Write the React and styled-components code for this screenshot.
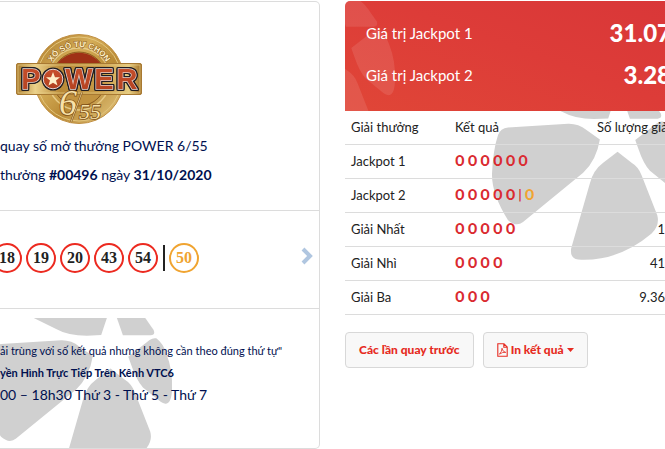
import React from "react";
import styled, { createGlobalStyle } from "styled-components";

const GlobalStyle = createGlobalStyle`
  *, *::before, *::after { box-sizing: border-box; }
  body {
    margin: 0;
    overflow-x: hidden;
    background: #fff;
    color: #222;
    font-family: Lato, "Open Sans", "Noto Sans", sans-serif;
    font-size: 13px;
    line-height: 20px;
  }
`;

const Page = styled.main`
  display: grid;
  grid-template-columns: minmax(0, 1fr) minmax(0, 1fr);
  gap: 25px;
  padding-top: 1px;
  align-items: start;
  overflow: hidden;
`;

const DrawCard = styled.article`
  border: 1px solid #dcdcdc;
  border-left: 0;
  border-radius: 0 5px 5px 0;
  color: #00104f;
  white-space: nowrap;
  overflow: hidden;
`;

const DrawHeader = styled.header`
  padding: 31px 0 21px;
  border-bottom: 1px solid #dcdcdc;
`;

const Logo = styled.svg`
  display: block;
  width: 128px;
  height: 92px;
  margin: 0 0 6px 15px;
`;

const LogoWord = styled.g`
  font: 700 29px "Liberation Sans", sans-serif;
  text-anchor: middle;
  fill: url(#copper);
  stroke: #ecd9d2;
  stroke-width: 1.4px;
  paint-order: stroke;
  filter: drop-shadow(1px 0 #201c22) drop-shadow(-1px 0 #201c22)
    drop-shadow(0 1px #201c22) drop-shadow(0 -1px #201c22);
`;

const DrawTitle = styled.h1`
  margin: 0;
  font-size: 14px;
  font-weight: 400;
  line-height: 29px;
`;

const DrawMeta = styled.p`
  margin: 0;
  font-size: 14px;
  line-height: 29px;
`;

const DrawNumbers = styled.section`
  display: flex;
  align-items: center;
  justify-content: space-between;
  height: 98px;
  padding: 0 6px 3px 0;
  border-bottom: 1px solid #dcdcdc;
`;

const BallList = styled.ul`
  display: flex;
  align-items: center;
  gap: 4px;
  margin: 0 0 0 -8px;
  padding: 0;
  list-style: none;
`;

const Ball = styled.li`
  display: grid;
  place-items: center;
  width: 30px;
  height: 30px;
  border: 2px solid ${(p) => (p.$bonus ? "#f0a431" : "#ec2a20")};
  border-radius: 50%;
  color: ${(p) => (p.$bonus ? "#f0a431" : "#222")};
  font: 700 16px/20px "Liberation Serif", serif;
`;

const BallDivider = styled.li`
  width: 2px;
  height: 26px;
  margin-left: 1px;
  background: #222;
`;

const NextButton = styled.button`
  display: flex;
  padding: 0 0 5px;
  border: 0;
  background: none;
  cursor: pointer;

  svg { width: 12px; height: 18px; }
`;

const DrawNotes = styled.section`
  position: relative;
  height: 139px;
  padding-top: 31px;
`;

const Note = styled.p`
  position: relative;
  margin: 0;
  font-size: ${(p) => (p.$large ? 14 : 11)}px;
  font-weight: ${(p) => (p.$strong ? 700 : 400)};
  line-height: 22px;
`;

const Watermark = styled.svg`
  position: absolute;
  left: ${(p) => p.$left}px;
  top: ${(p) => p.$top}px;
  width: 197px;
  fill: ${(p) => p.$fill || "#d0d0d0"};
  pointer-events: none;
`;

const Results = styled.section`
  min-width: 0;
  white-space: nowrap;
`;

const JackpotPanel = styled.dl`
  position: relative;
  margin: 0;
  padding: 11px 0 15px 21px;
  border-radius: 5px 0 0 0;
  overflow: hidden;
  background: linear-gradient(20deg, #e04637 0%, #dd3c38 55%, #d93738 100%);
  color: #fff;
`;

const JackpotRow = styled.div`
  position: relative;
  display: flex;
  align-items: center;
  justify-content: space-between;
  height: 42px;
`;

const JackpotName = styled.dt`
  font-size: 15px;
`;

const JackpotValue = styled.dd`
  margin: 0 -6px 0 0;
  font-size: 24px;
  font-weight: 900;
`;

const PrizeArea = styled.div`
  position: relative;
  overflow: hidden;
`;

const PrizeTable = styled.table`
  position: relative;
  width: 100%;
  table-layout: fixed;
  border-collapse: collapse;
`;

const PrizeRow = styled.tr`
  height: ${(p) => (p.$head ? 33 : 34)}px;
  border-bottom: 1px solid #dcdcdc;
`;

const HeadCell = styled.th`
  width: ${(p) => p.$width};
  padding: 0 0 0 ${(p) => (p.$inset ? 6 : 0)}px;
  font-weight: 400;
  text-align: left;
`;

const Cell = styled.td`
  padding: 0 0 0 ${(p) => (p.$inset ? 6 : 0)}px;
  text-align: ${(p) => (p.$end ? "right" : "left")};
`;

const Matches = styled.span`
  display: flex;
  align-items: center;
  gap: 3px;
  color: #da2a30;
  font-family: Roboto, sans-serif;
  font-size: 14px;
  font-weight: 700;
`;

const BonusMatch = styled.span`
  color: #f0a431;
`;

const Actions = styled.div`
  display: flex;
  gap: 9px;
  padding-top: 17px;
`;

const ActionButton = styled.button`
  display: inline-flex;
  align-items: center;
  gap: 3px;
  height: 36px;
  padding: 0 13px;
  border: 1px solid #d8d8d8;
  border-radius: 4px;
  background: #f8f8f8;
  color: #e62b22;
  font: inherit;
  font-size: 12px;
  font-weight: 900;
  cursor: pointer;
`;

const Petals = () => (
  <>
    <path d="M618-26H837L820 25L777 27Q720 27 685 7Z" />
    <path d="M880-60H915Q935-50 952-26L977 10Q983 25 968 26H885L867-26Z" />
    <path d="M520 52L700 41Q730 40 755 60L795 88Q785 150 745 188L565 335Q545 352 520 330Q470 250 472 190Q475 120 490 75Q497 54 520 52Z" />
    <path d="M985 35Q1005 50 1015 80Q1035 130 1032 190Q1030 232 1012 231Q1005 230 998 225L945 182Q925 160 910 115L901 90L965 40Q975 33 985 35Z" />
    <path d="M848 125L890 158Q910 170 920 195L967 315Q975 345 950 370Q850 455 730 448Q705 445 709 415L765 220Q775 180 805 158Z" />
  </>
);

const PowerLogo = () => (
  <Logo viewBox="0 0 128 92" role="img" aria-label="Power 6/55">
    <defs>
      <linearGradient id="gold" x1="0" y1="0" x2="1" y2="1">
        <stop offset="0" stopColor="#a87526" />
        <stop offset=".35" stopColor="#d5ad58" />
        <stop offset=".6" stopColor="#b98a35" />
        <stop offset="1" stopColor="#e9cf8b" />
      </linearGradient>
      <linearGradient id="band" x1="0" y1="0" x2="1" y2="0">
        <stop offset="0" stopColor="#a87a2c" />
        <stop offset=".15" stopColor="#ecd28b" />
        <stop offset=".35" stopColor="#b98a38" />
        <stop offset=".7" stopColor="#c99c48" />
        <stop offset=".9" stopColor="#e6cc80" />
        <stop offset="1" stopColor="#9d6b22" />
      </linearGradient>
      <linearGradient id="copper" x1="0" y1="0" x2="0" y2="1">
        <stop offset="0" stopColor="#c9502c" />
        <stop offset="1" stopColor="#b1401f" />
      </linearGradient>
      <path id="arc" d="M32 46A32 32 0 0 1 96 46" />
    </defs>
    <circle cx="64" cy="46" r="44.5" fill="url(#gold)" stroke="#c08f43" />
    <circle cx="64" cy="46" r="42" fill="none" stroke="#e3c57c" />
    <circle cx="64" cy="46" r="31" fill="none" stroke="#e6ca86" strokeWidth="1.5" />
    <circle cx="64" cy="46" r="27" fill="#c29340" stroke="#8d5c1f" />
    <path d="M42 31A27 27 0 0 1 86 31Z" fill="#9f3116" />
    <text fontFamily="Liberation Sans" fontWeight="700" fontSize="8" fill="#fff1c8" stroke="#8a5a1c" strokeWidth="1" paintOrder="stroke">
      <textPath href="#arc" startOffset="50%" textAnchor="middle">XỔ SỐ TỰ CHỌN</textPath>
    </text>
    <rect x="1.5" y="30.5" width="125" height="31" rx="1.5" fill="url(#band)" stroke="#a87932" />
    <rect x="3" y="32" width="122" height="28" fill="none" stroke="#e8cd86" strokeWidth=".7" />
    <LogoWord>
      <text x="16" y="56">P</text>
      <text x="64" y="56">W</text>
      <text x="89" y="56">E</text>
      <text x="112" y="56">R</text>
    </LogoWord>
    <circle cx="38" cy="46" r="11.5" fill="#201c22" />
    <circle cx="38" cy="46" r="9.8" fill="url(#copper)" stroke="#e8d5d4" />
    <path d="M38 39L40 44.2L45 44.3L41 47.6L42.5 52.5L38 49.7L33.5 52.5L35 47.6L31 44.3L36 44.2Z" fill="#fff0c9" />
    <g fontFamily="Liberation Serif" fontStyle="italic" fill="#f7e1a8" stroke="#805018" strokeWidth="1.6" paintOrder="stroke">
      <text x="44" y="82" fontSize="36">6</text>
      <text x="64" y="86" fontSize="22">55</text>
    </g>
    <path d="M56 89L67 59" stroke="#805018" strokeWidth="2" />
    <path d="M56 89L67 59" stroke="#f3d999" strokeWidth=".8" />
  </Logo>
);

const PdfIcon = () => (
  <svg width="11" height="14" viewBox="0 0 11 14" fill="none" stroke="currentColor" strokeWidth="1.1" aria-hidden="true">
    <path d="M.8.8H7L10.2 4V13.2H.8ZM6.8 1V4.2H10" />
    <path d="M2.4 11.2Q4.9 8.8 5 5.2Q5.4 8.8 8.8 9.4Q5.5 8.8 2.4 11.2Z" strokeWidth=".8" />
  </svg>
);

const balls = ["18", "19", "20", "43", "54"];
const prizes = [
  { name: "Jackpot 1", matches: 6, count: "" },
  { name: "Jackpot 2", matches: 5, bonus: true, count: "" },
  { name: "Giải Nhất", matches: 5, count: "1" },
  { name: "Giải Nhì", matches: 4, count: "41" },
  { name: "Giải Ba", matches: 3, count: "9.36" },
];

export default function App() {
  return (
    <>
      <GlobalStyle />
      <Page>
        <DrawCard>
          <DrawHeader>
            <PowerLogo />
            <DrawTitle>quay số mở thưởng POWER 6/55</DrawTitle>
            <DrawMeta>thưởng <b>#00496</b> ngày <b>31/10/2020</b></DrawMeta>
          </DrawHeader>
          <DrawNumbers>
            <BallList>
              {balls.map((n) => <Ball key={n}>{n}</Ball>)}
              <BallDivider aria-hidden="true" />
              <Ball $bonus>50</Ball>
            </BallList>
            <NextButton type="button" aria-label="Next">
              <svg viewBox="0 0 12 18" fill="none" stroke="#b0c6e0" strokeWidth="4">
                <path d="M2 2L9 9L2 16" />
              </svg>
            </NextButton>
          </DrawNumbers>
          <DrawNotes>
            <Watermark $left={-19} $top={9} viewBox="460 -26 590 390" aria-hidden="true"><Petals /></Watermark>
            <Note>ải trùng với số kết quả nhưng không cần theo đúng thứ tự"</Note>
            <Note $strong>yền Hình Trực Tiếp Trên Kênh VTC6</Note>
            <Note $large>00 – 18h30 Thứ 3 - Thứ 5 - Thứ 7</Note>
          </DrawNotes>
        </DrawCard>

        <Results>
          <JackpotPanel>
            <Watermark $left={-141} $top={-3} $fill="rgba(255,255,255,.1)" viewBox="460 -60 590 520" aria-hidden="true"><Petals /></Watermark>
            <JackpotRow><JackpotName>Giá trị Jackpot 1</JackpotName><JackpotValue>31.07</JackpotValue></JackpotRow>
            <JackpotRow><JackpotName>Giá trị Jackpot 2</JackpotName><JackpotValue>3.28</JackpotValue></JackpotRow>
          </JackpotPanel>
          <PrizeArea>
            <Watermark $left={143} $top={-21} viewBox="460 -60 590 520" aria-hidden="true"><Petals /></Watermark>
            <PrizeTable>
              <thead>
                <PrizeRow $head>
                  <HeadCell $width="110px" $inset>Giải thưởng</HeadCell>
                  <HeadCell>Kết quả</HeadCell>
                  <HeadCell $width="68px">Số lượng giả</HeadCell>
                </PrizeRow>
              </thead>
              <tbody>
                {prizes.map((p) => (
                  <PrizeRow key={p.name}>
                    <Cell $inset>{p.name}</Cell>
                    <Cell>
                      <Matches>
                        {Array.from({ length: p.matches }, (_, i) => <span key={i}>O</span>)}
                        {p.bonus && <><span>|</span><BonusMatch>O</BonusMatch></>}
                      </Matches>
                    </Cell>
                    <Cell $end>{p.count}</Cell>
                  </PrizeRow>
                ))}
              </tbody>
            </PrizeTable>
          </PrizeArea>
          <Actions>
            <ActionButton type="button">Các lần quay trước</ActionButton>
            <ActionButton type="button">
              <PdfIcon />
              In kết quả
              <svg width="7" height="4" viewBox="0 0 7 4" fill="currentColor" aria-hidden="true"><path d="M0 0H7L3.5 4Z" /></svg>
            </ActionButton>
          </Actions>
        </Results>
      </Page>
    </>
  );
}
